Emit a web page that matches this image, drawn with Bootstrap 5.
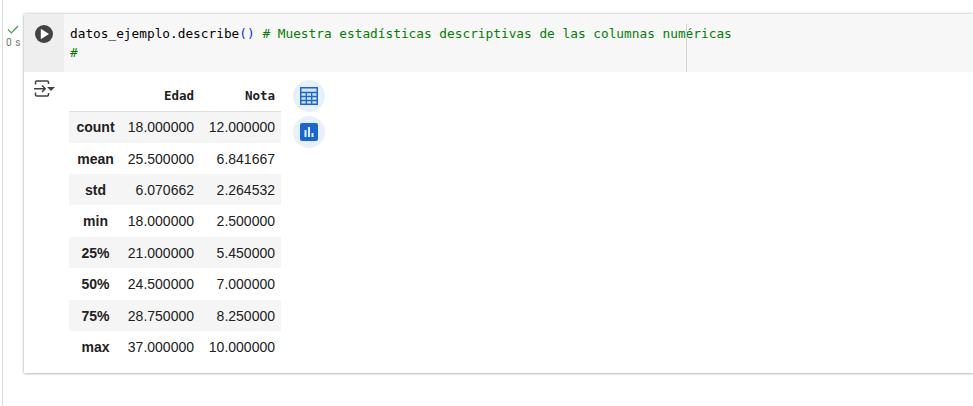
<!DOCTYPE html>
<html lang="es">
<head>
<meta charset="utf-8">
<title>Colab</title>
<link href="https://cdn.jsdelivr.net/npm/bootstrap@5.3.0/dist/css/bootstrap.min.css" rel="stylesheet">
<style>
html,body{height:406px;overflow:hidden;background:#fff}
.nb-page{margin-left:2px;border-left:1px solid #dcdcdc;height:406px;padding-top:14px}
.nb-status{width:21px;flex:none;padding-top:11px;color:#757575;font:10px/12px Roboto,"Liberation Sans",sans-serif;text-align:center}
.nb-status svg{display:block;margin:0 0 3px 4px}
.nb-status span{display:block;letter-spacing:.6px;white-space:nowrap}
.nb-cell{height:359px;box-shadow:0 0 3px rgba(0,0,0,.28),0 1px 2px rgba(0,0,0,.14);background:#fff}
.nb-code{height:58px;background:#f7f7f7}
.nb-gutter{width:40px;flex:none;background:#eee;padding:11px 0 0 11px}
.nb-src{padding:10px 0 0 6px;font:12.79px/19px "DejaVu Sans Mono",monospace;color:#000;white-space:nowrap;position:relative;flex:1}
.nb-paren{color:#0431fa}.nb-cmt{color:#008000}
.nb-ruler{position:absolute;left:622px;top:10px;bottom:0;width:1px;background:#d3d3d3}
.nb-outicon{width:45px;flex:none;padding:8px 0 0 10px}
.df-tbl{width:212px;margin:8px 0 0;table-layout:fixed;border-collapse:collapse;font:14px/20px "Liberation Sans",Arial,sans-serif;color:#212121}
.df-tbl th,.df-tbl td{padding:0 6px 0 0;height:31px;text-align:right;vertical-align:middle;border:0;background:transparent;box-shadow:none;color:inherit}
.df-tbl tbody tr.row-tall th,.df-tbl tbody tr.row-tall td{height:32px}
.df-tbl thead th{font:bold 12.5px/20px "DejaVu Sans Mono",monospace;color:#212121;height:31px;padding-top:2px;border-bottom:1px solid #ddd}
.df-tbl tbody th{text-align:center;padding:0;font-weight:700}
.df-tbl tbody tr:nth-child(odd) th,.df-tbl tbody tr:nth-child(odd) td{background:#f5f5f5}
.df-btns{padding:8px 0 0 12px;gap:4px}
.df-btn{width:32px;height:32px;border-radius:50%;background:#e8f0fe;border:0;padding:0}
</style>
</head>
<body>
<div class="nb-page d-flex">
  <div class="nb-status">
    <svg width="12" height="9" viewBox="0 0 12 9"><path d="M1 4.500l3.400 3.400L11 1" fill="none" stroke="#4a9d5b" stroke-width="1.300"/></svg>
    <span>0 s</span>
  </div>
  <div class="nb-cell flex-grow-1">
    <div class="nb-code d-flex">
      <div class="nb-gutter">
        <svg class="d-block" width="18" height="18" viewBox="0 0 18 18"><circle cx="9" cy="9" r="9" fill="#424242"/><path d="M5.800 3.700v10.600L14 9z" fill="#fff"/></svg>
      </div>
      <div class="nb-src">
        <div>datos_ejemplo.describe<span class="nb-paren">()</span> <span class="nb-cmt"># Muestra estadísticas descriptivas de las columnas numéricas</span></div>
        <div class="nb-cmt">#</div>
        <div class="nb-ruler"></div>
      </div>
    </div>
    <div class="d-flex">
      <div class="nb-outicon">
        <svg class="d-block" width="21" height="17" viewBox="0 0 21 17" fill="none" stroke="#424242" stroke-width="1.500"><path d="M1.500 4.500V2.200Q1.500 1 2.700 1h10.600Q14.500 1 14.500 2.200V4M1.500 12.500v2.300Q1.500 16 2.700 16h10.600q1.200 0 1.200-1.200V13"/><path d="M0 8.750h11M8 5.500l3.300 3.250L8 12"/><path d="M13 7h8l-4 4z" fill="#424242" stroke="none"/></svg>
      </div>
      <table class="table df-tbl">
        <thead><tr><th style="width:53px"></th><th style="width:78px">Edad</th><th style="width:81px">Nota</th></tr></thead>
        <tbody>
          <tr class="row-tall"><th>count</th><td>18.000000</td><td>12.000000</td></tr>
          <tr><th>mean</th><td>25.500000</td><td>6.841667</td></tr>
          <tr><th>std</th><td>6.070662</td><td>2.264532</td></tr>
          <tr class="row-tall"><th>min</th><td>18.000000</td><td>2.500000</td></tr>
          <tr><th>25%</th><td>21.000000</td><td>5.450000</td></tr>
          <tr class="row-tall"><th>50%</th><td>24.500000</td><td>7.000000</td></tr>
          <tr><th>75%</th><td>28.750000</td><td>8.250000</td></tr>
          <tr><th>max</th><td>37.000000</td><td>10.000000</td></tr>
        </tbody>
      </table>
      <div class="df-btns d-flex flex-column">
        <button class="df-btn d-flex align-items-center justify-content-center" aria-label="Tabla">
          <svg width="18" height="18" viewBox="0 0 18 18"><rect x=".75" y=".75" width="16.500" height="16.500" fill="#d2e3fc" stroke="#1967d2" stroke-width="1.500"/><path d="M1 5.500h16M1 9.500h16M1 13.500h16M6.300 5.500V17M11.700 5.500V17" stroke="#1967d2" stroke-width="1.300"/></svg>
        </button>
        <button class="df-btn d-flex align-items-center justify-content-center" aria-label="Gráfico">
          <svg width="18" height="18" viewBox="0 0 18 18"><rect width="18" height="18" rx="2" fill="#1967d2"/><path d="M4.500 7h2v7h-2zM8 4h2v10H8zM11.500 10h2v4h-2z" fill="#e8f0fe"/></svg>
        </button>
      </div>
    </div>
  </div>
</div>
<script src="https://cdn.jsdelivr.net/npm/bootstrap@5.3.0/dist/js/bootstrap.bundle.min.js"></script>
</body>
</html>
